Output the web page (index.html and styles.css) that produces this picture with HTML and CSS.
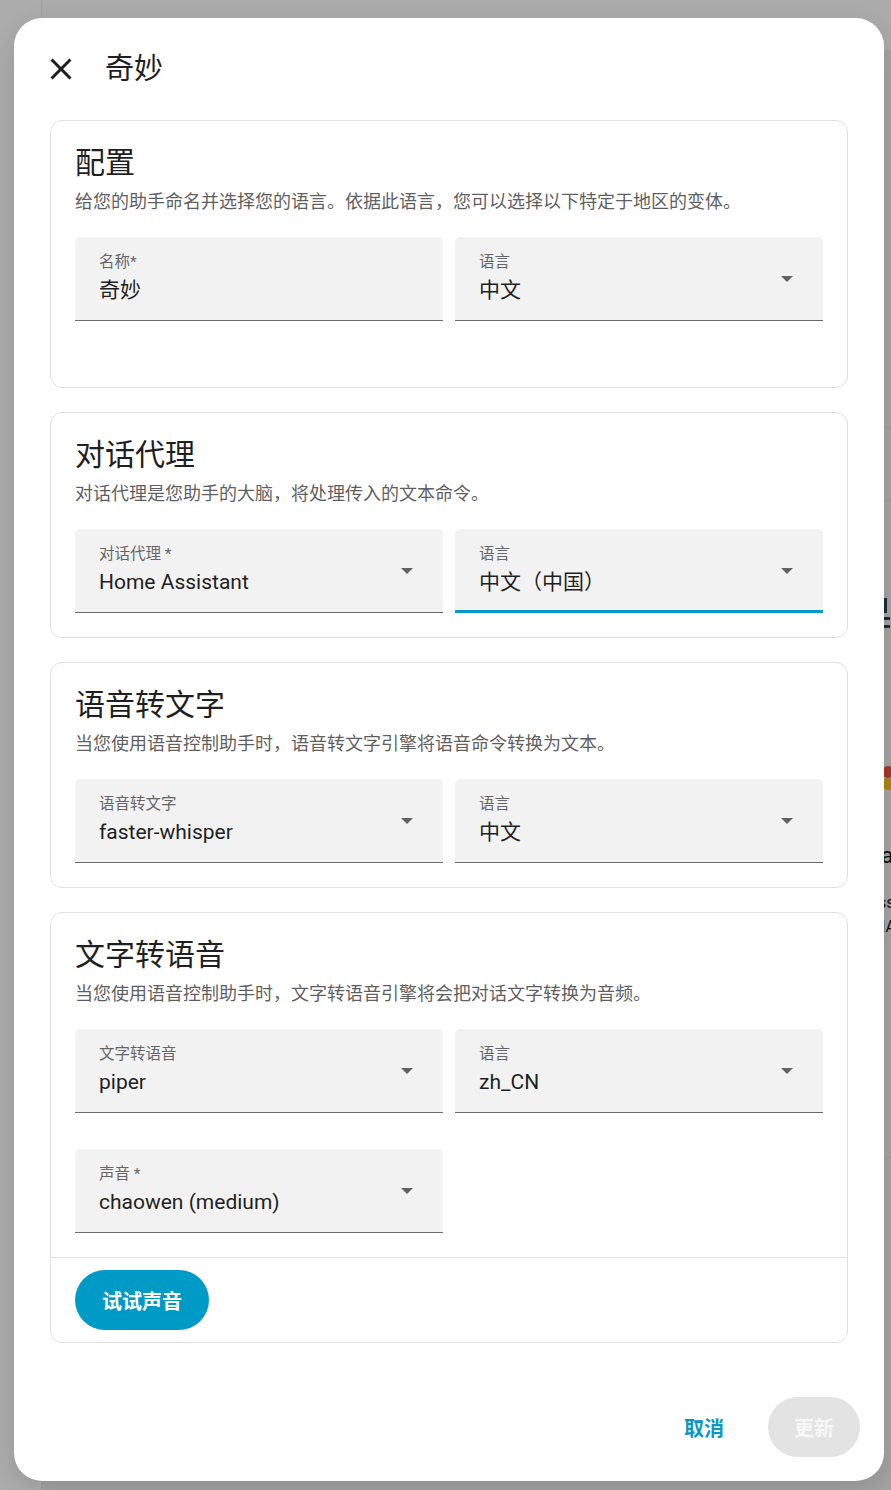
FILE: index.html
```html
<!DOCTYPE html>
<html lang="zh-CN">
<head>
<meta charset="utf-8">
<title>奇妙</title>
<link rel="stylesheet" href="styles.css">
</head>
<body>
  <!-- page underneath the modal, dimmed by the scrim -->
  <div class="page-behind" aria-hidden="true">
    <div class="pb-sidebar"></div>
    <div class="pb-topbar"></div>
    <div class="pb-line pb-line-1"></div>
    <div class="pb-line pb-line-2"></div>
    <div class="pb-mark pb-mark-1"></div>
    <div class="pb-mark pb-mark-2"></div>
    <div class="pb-mark pb-mark-3"></div>
    <div class="pb-dot pb-dot-red"></div>
    <div class="pb-dot pb-dot-yellow"></div>
    <div class="pb-text pb-text-1">ta</div>
    <div class="pb-text pb-text-2">ss</div>
    <div class="pb-text pb-text-3">HA</div>
    <div class="pb-line pb-line-3"></div>
  </div>

  <div class="dialog" role="dialog">
    <header class="dialog-header">
      <button class="icon-btn" type="button" aria-label="关闭">
        <svg viewBox="0 0 24 24" width="36" height="36"><path d="M19,6.41L17.59,5L12,10.59L6.41,5L5,6.41L10.59,12L5,17.59L6.41,19L12,13.41L17.59,19L19,17.59L13.41,12L19,6.41Z"/></svg>
      </button>
      <h2 class="dialog-title">奇妙</h2>
    </header>

    <div class="dialog-content">
      <section class="card">
        <div class="card-body">
          <h3 class="card-title">配置</h3>
          <p class="card-desc">给您的助手命名并选择您的语言。依据此语言，您可以选择以下特定于地区的变体。</p>
          <div class="fields">
            <div class="field">
              <div class="field-label">名称*</div>
              <div class="field-value">奇妙</div>
            </div>
            <div class="field select">
              <div class="field-label">语言</div>
              <div class="field-value">中文</div>
              <span class="arrow"></span>
            </div>
          </div>
          <div class="spacer"></div>
        </div>
      </section>

      <section class="card">
        <div class="card-body">
          <h3 class="card-title">对话代理</h3>
          <p class="card-desc">对话代理是您助手的大脑，将处理传入的文本命令。</p>
          <div class="fields">
            <div class="field select">
              <div class="field-label">对话代理 *</div>
              <div class="field-value">Home Assistant</div>
              <span class="arrow"></span>
            </div>
            <div class="field select focused">
              <div class="field-label">语言</div>
              <div class="field-value">中文（中国）</div>
              <span class="arrow"></span>
            </div>
          </div>
        </div>
      </section>

      <section class="card">
        <div class="card-body">
          <h3 class="card-title">语音转文字</h3>
          <p class="card-desc">当您使用语音控制助手时，语音转文字引擎将语音命令转换为文本。</p>
          <div class="fields">
            <div class="field select">
              <div class="field-label">语音转文字</div>
              <div class="field-value">faster-whisper</div>
              <span class="arrow"></span>
            </div>
            <div class="field select">
              <div class="field-label">语言</div>
              <div class="field-value">中文</div>
              <span class="arrow"></span>
            </div>
          </div>
        </div>
      </section>

      <section class="card">
        <div class="card-body">
          <h3 class="card-title">文字转语音</h3>
          <p class="card-desc">当您使用语音控制助手时，文字转语音引擎将会把对话文字转换为音频。</p>
          <div class="fields">
            <div class="field select">
              <div class="field-label">文字转语音</div>
              <div class="field-value">piper</div>
              <span class="arrow"></span>
            </div>
            <div class="field select">
              <div class="field-label">语言</div>
              <div class="field-value">zh_CN</div>
              <span class="arrow"></span>
            </div>
            <div class="field select">
              <div class="field-label">声音 *</div>
              <div class="field-value">chaowen (medium)</div>
              <span class="arrow"></span>
            </div>
          </div>
        </div>
        <div class="card-actions">
          <button class="btn btn-filled" type="button">试试声音</button>
        </div>
      </section>
    </div>

    <footer class="dialog-footer">
      <button class="btn btn-text" type="button">取消</button>
      <button class="btn btn-disabled" type="button" disabled>更新</button>
    </footer>
  </div>
</body>
</html>
```

FILE: styles.css
```css
* {
  box-sizing: border-box;
}

html,
body {
  margin: 0;
  padding: 0;
}

body {
  width: 891px;
  min-height: 1490px;
  background: #a3a3a3;
  font-family: Roboto, "Noto Sans CJK SC", sans-serif;
  color: #1f1f1f;
  position: relative;
  overflow: hidden;
}

/* ---------- dimmed page underneath ---------- */
.page-behind {
  position: absolute;
  inset: 0;
  z-index: 0;
}

.pb-sidebar {
  position: absolute;
  left: 0;
  top: 0;
  width: 42px;
  height: 100%;
  background: #acacac;
  border-right: 1px solid #a0a0a0;
}

.pb-topbar {
  position: absolute;
  left: 42px;
  right: 0;
  top: 0;
  height: 50px;
  background: #ababab;
}

.pb-line {
  position: absolute;
  left: 860px;
  right: 0;
  height: 1px;
  background: #9a9a9a;
}

.pb-line-1 { top: 427px; }
.pb-line-2 { top: 500px; }
.pb-line-3 { top: 1157px; }

.pb-mark {
  position: absolute;
  background: #1d2a3a;
}

.pb-mark-1 { left: 884px; top: 598px; width: 3px; height: 15px; }
.pb-mark-2 { left: 884px; top: 617px; width: 6px; height: 3px; }
.pb-mark-3 { left: 884px; top: 625px; width: 6px; height: 3px; }

.pb-dot {
  position: absolute;
  width: 12px;
  height: 12px;
  border-radius: 50%;
  left: 882px;
}

.pb-dot-red { top: 766px; background: #a8362b; }
.pb-dot-yellow { top: 778px; background: #a9860b; }

.pb-text {
  position: absolute;
  font-size: 18px;
  line-height: 20px;
  color: #111;
  white-space: nowrap;
}

.pb-text-1 { top: 846px; left: 874px; font-size: 22px; }
.pb-text-2 { top: 893px; left: 878px; font-size: 16px; }
.pb-text-3 { top: 917px; left: 874px; font-size: 16px; }

/* ---------- dialog ---------- */
.dialog {
  position: relative;
  z-index: 1;
  margin: 18px 0 0 14px;
  width: 870px;
  height: 1463px;
  background: #fff;
  border-radius: 28px;
  display: flex;
  flex-direction: column;
  box-shadow: 0 8px 24px rgba(0, 0, 0, 0.12);
}

.dialog-header {
  display: flex;
  align-items: center;
  gap: 26px;
  height: 48px;
  margin-top: 27px;
  padding: 0 36px 0 29px;
}

.icon-btn {
  width: 36px;
  height: 36px;
  padding: 0;
  border: 0;
  background: none;
  display: flex;
  align-items: center;
  justify-content: center;
}

.icon-btn svg {
  fill: #1f1f1f;
}

.dialog-title {
  margin: 0;
  font-size: 29px;
  font-weight: 400;
  line-height: 48px;
  color: #1f1f1f;
}

.dialog-content {
  display: flex;
  flex-direction: column;
  gap: 24px;
  padding: 27px 36px 54px;
}

/* ---------- cards ---------- */
.card {
  border: 1px solid #e0e0e0;
  border-radius: 12px;
  background: #fff;
}

.card-body {
  padding: 24px 24px 24px;
}

.card-title {
  margin: 0;
  font-size: 30px;
  font-weight: 400;
  line-height: 36px;
  color: #1f1f1f;
}

.card-desc {
  margin: 9px 0 0;
  font-size: 18px;
  line-height: 24px;
  color: #5f5f5f;
}

.fields {
  margin-top: 23px;
  display: grid;
  grid-template-columns: 1fr 1fr;
  gap: 36px 12px;
}

.spacer {
  height: 42px;
}

/* ---------- filled text fields / selects ---------- */
.field {
  position: relative;
  height: 84px;
  padding: 15px 24px 0;
  background: #f2f2f2;
  border-radius: 5px 5px 0 0;
  border-bottom: 1px solid #6b6b6b;
}

.field.focused {
  border-bottom: 3px solid #009ac7;
}

.field-label {
  font-size: 15.5px;
  line-height: 20px;
  color: #666;
}

.field-value {
  margin-top: 3px;
  font-size: 21px;
  line-height: 30px;
  color: #1f1f1f;
}

.arrow {
  position: absolute;
  right: 30px;
  top: 39px;
  width: 0;
  height: 0;
  border-left: 6px solid transparent;
  border-right: 6px solid transparent;
  border-top: 6px solid #626262;
}

/* ---------- buttons ---------- */
.card-actions {
  border-top: 1px solid #e0e0e0;
  padding: 12px 24px;
}

.btn {
  font-family: Roboto, "Noto Sans CJK SC", sans-serif;
  font-size: 20px;
  font-weight: 700;
  height: 60px;
  border: 0;
  border-radius: 30px;
  padding: 0 27px;
  cursor: pointer;
}

.btn-filled {
  background: #009ac7;
  color: #fff;
}

.dialog-footer {
  display: flex;
  justify-content: flex-end;
  align-items: center;
  gap: 24px;
  padding: 0 24px 24px;
}

.btn-text {
  background: none;
  color: #0a97c6;
  padding: 0 20px;
}

.btn-disabled {
  background: #e3e3e3;
  color: #f7f7f7;
  padding: 0 26px;
  cursor: default;
}
```
